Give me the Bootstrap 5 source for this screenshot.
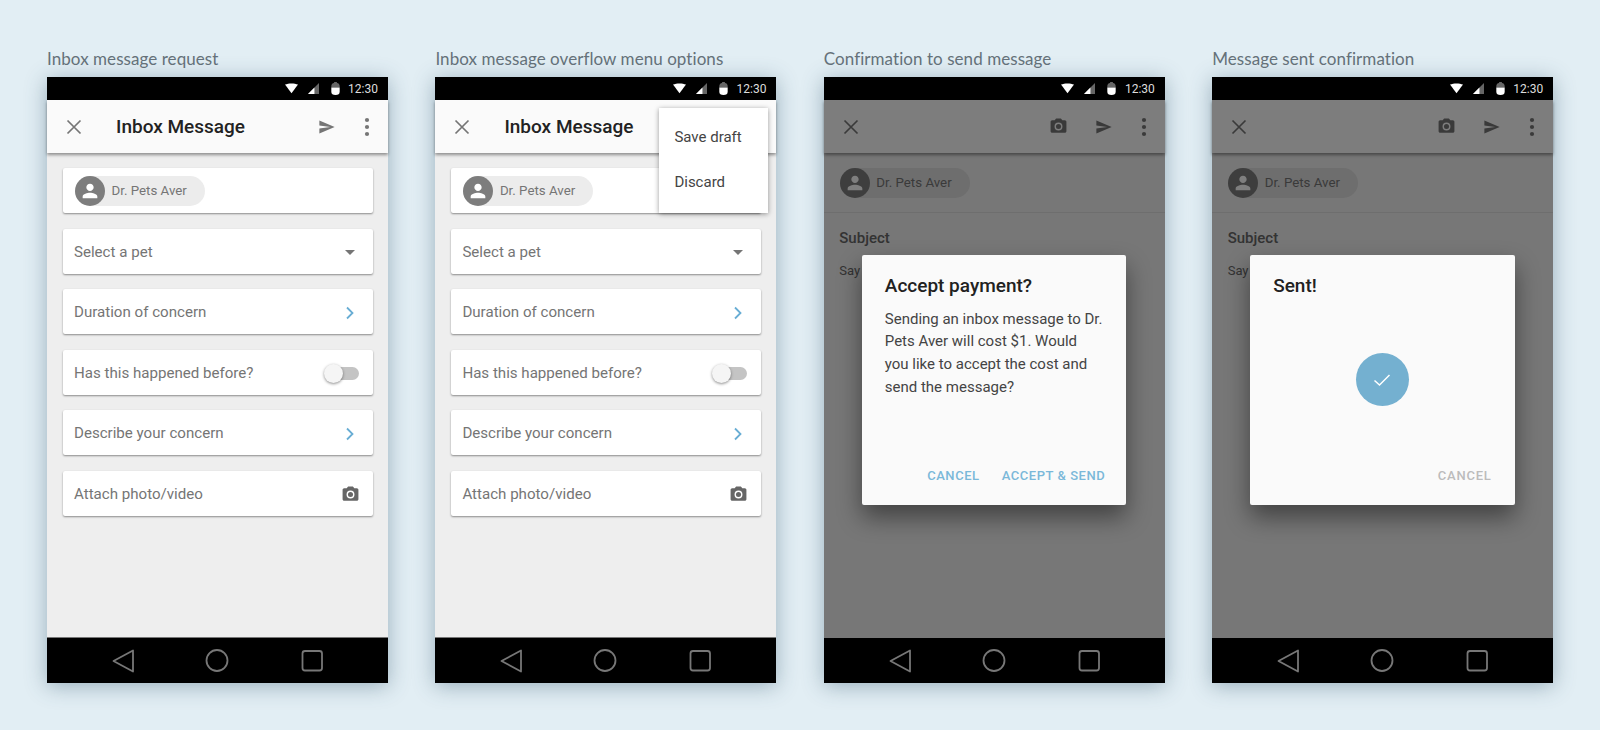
<!DOCTYPE html>
<html lang="en">
<head>
  <meta charset="UTF-8">
  <title>Inbox message flows</title>
  <meta name="viewport" content="width=device-width, initial-scale=1">
  <link href="https://cdn.jsdelivr.net/npm/bootstrap@5.3.2/dist/css/bootstrap.min.css" rel="stylesheet">
  <style>
    html, body { height: 730px; overflow: hidden; }
    body { background-color: #e2eef4; font-family: Roboto, "Liberation Sans", sans-serif; }
    .board { padding: 48px 0 0 47px; gap: 47.4px; }
    .flow { width: 341px; }
    .flow-label { font-family: Lato, "Liberation Sans", sans-serif; font-size: 17px; letter-spacing: .06px; line-height: 21px; height: 29px; color: #66727a; white-space: nowrap; }
    .phone { height: 606px; background: #eee; box-shadow: 0 3px 20px rgba(50, 85, 110, .42); }
    .status { height: 23px; background: #000; color: #ddd; font-size: 12px; padding-right: 10px; gap: 10px; }
    .st-batt { margin: 0 -1.5px 0 2px; }
    .appbar { height: 53px; background: #fafafa; box-shadow: 0 2px 3px rgba(0, 0, 0, .4); z-index: 1; padding: 0 9px 0 15px; }
    .appbar-title { font-size: 19px; font-weight: 500; color: #222; margin-left: 30px; padding-top: 1px; }
    .appbar-icons { gap: 16px; }
    .screen-body { padding: 15px 15px 0 15.6px; gap: 15.5px; }
    .field { height: 45px; border-radius: 2px; background: #fff; border: 0; box-shadow: 0 1px 2px rgba(0, 0, 0, .42); padding: 2px 11px 0 11.4px; color: #757575; font-size: 15.1px; }
    .field-chip { padding: 0 0 0 12.4px; }
    .person-chip { height: 30px; width: 130px; background: #ececec; border-radius: 15px; color: #757575; font-size: 13.3px; gap: 6.5px; }
    .avatar { width: 30px; height: 30px; background: #7d7d7d; border-radius: 50%; }
    .toggle { width: 28px; height: 13px; background: #c4c4c4; border-radius: 7px; position: relative; margin-right: 3px; }
    .toggle::before { content: ""; position: absolute; left: -7px; top: -3px; width: 19px; height: 19px; border-radius: 50%; background: #f5f5f5; box-shadow: 0 1px 3px rgba(0, 0, 0, .45); }
    .cam-field { margin-right: 2.5px; }
    .screen-nav { height: 46px; background: #000; border-top: 1px solid #777; }
    .over-menu { position: absolute; top: 31px; right: 8px; width: 109px; height: 105px; background: #fff; box-shadow: 0 1px 5px rgba(0, 0, 0, .4); z-index: 2; padding: 7px 0 0 15px; color: #444; font-size: 15px; }
    .over-menu div { height: 45px; line-height: 45px; }
    .dim-body { padding: 15px 16px 0 15.5px; }
    .dim-head { height: 45px; margin: 0 -16px 0 -15.5px; padding: 0 16px; border-bottom: 1px solid #ddd; }
    .dim-head .person-chip { background: #dcdcdc; }
    .dim-subject { margin-top: 15px; font-size: 15px; font-weight: 500; color: #666; line-height: 20px; }
    .dim-say { margin-top: 13px; font-size: 13px; color: #666; line-height: 20px; }
    .scrim { position: absolute; left: 0; right: 0; top: 23px; bottom: 46px; background: rgba(0, 0, 0, .5); z-index: 3; }
    .dialog-box { position: absolute; left: 38px; top: 178px; width: 264.5px; height: 250px; background: #fafafa; border-radius: 2px; box-shadow: 0 12px 24px rgba(0, 0, 0, .45); z-index: 4; }
    .dialog-title { font-size: 19px; font-weight: 500; color: #212121; padding: 19px 23px 0; line-height: 24px; height: 50px; white-space: nowrap; }
    .dialog-text { font-size: 15px; line-height: 22.7px; color: #444; padding: 2.5px 0 0 23px; white-space: nowrap; }
    .dialog-actions { height: 59px; padding: 0 21px 20px; gap: 22px; font-size: 13px; font-weight: 500; letter-spacing: .55px; color: #7ab8d9; }
    .dialog-actions.is-off { color: #bcbcbc; padding-right: 23px; letter-spacing: .8px; }
    .done-wrap { height: 146px; padding-top: 8px; }
    .done-dot { width: 53px; height: 53px; background: #74b0d0; border-radius: 50%; }
    svg { display: block; flex: none; }
  </style>
</head>
<body>

  <svg width="0" height="0" class="position-absolute">
    <symbol id="i-wifi" viewBox="0 0 14 11"><path d="M0 1.2C4 -.4 10 -.4 14 1.2L7 10.5z"/></symbol>
    <symbol id="i-signal" viewBox="0 0 12 12"><path d="M0 12 12 0v12z" fill="#666"/><path d="M0 12 7 5v7z" fill="#fff"/></symbol>
    <symbol id="i-batt" viewBox="0 0 9 14"><path d="M3 0h3v1.2C8 1.5 9 2.6 9 4.5V6H0V4.5C0 2.6 1 1.5 3 1.2z" fill="#666"/><path d="M0 6h9v4.5C9 12.8 7.5 14 4.5 14S0 12.8 0 10.5z" fill="#fff"/></symbol>
    <symbol id="i-close" viewBox="0 0 24 24"><path d="M5.5 5.5 18.5 18.5M18.5 5.5 5.5 18.5" fill="none" stroke="#757575" stroke-width="1.7"/></symbol>
    <symbol id="i-send" viewBox="-4 -4.5 33 33"><path d="M2.01 21 23 12 2.01 3 2 10l15 2-15 2z"/></symbol>
    <symbol id="i-more" viewBox="0 0 24 24"><circle cx="12" cy="5" r="2.1"/><circle cx="12" cy="12" r="2.1"/><circle cx="12" cy="19" r="2.1"/></symbol>
    <symbol id="i-camera" viewBox="0 0 24 24"><path fill-rule="evenodd" d="M9 2 7.17 4H4C2.9 4 2 4.9 2 6v12c0 1.1.9 2 2 2h16c1.1 0 2-.9 2-2V6c0-1.1-.9-2-2-2h-3.17L15 2zm3 15a5 5 0 1 1 0-10 5 5 0 0 1 0 10z"/><circle cx="12" cy="12" r="3.2"/></symbol>
    <symbol id="i-person" viewBox="0 0 24 24"><path d="M12 12c2.21 0 4-1.79 4-4s-1.79-4-4-4-4 1.79-4 4 1.79 4 4 4zm0 2c-2.67 0-8 1.34-8 4v2h16v-2c0-2.66-5.33-4-8-4z"/></symbol>
    <symbol id="i-chev" viewBox="0 0 24 24"><path d="M9 6.5 14.5 12 9 17.5" fill="none" stroke="#68add4" stroke-width="1.8"/></symbol>
    <symbol id="i-nav" viewBox="0 0 341 45"><g fill="none" stroke="#777" stroke-width="1.8" stroke-linejoin="round"><path d="M86 12.5v21L66.5 23z"/><circle cx="170" cy="22.5" r="10.5"/><rect x="255.5" y="13" width="19.5" height="19.5" rx="2.5"/></g></symbol>
  </svg>

  <div class="board d-flex">

    <!-- request -->
    <section class="flow">
      <div class="flow-label">Inbox message request</div>
      <div class="phone d-flex flex-column position-relative">
        <div class="status d-flex align-items-center justify-content-end">
          <svg width="13" height="11" fill="#fff"><use href="#i-wifi"/></svg>
          <svg width="11" height="11"><use href="#i-signal"/></svg>
          <svg width="9" height="13" class="st-batt"><use href="#i-batt"/></svg>
          <span>12:30</span>
        </div>
        <div class="appbar d-flex align-items-center position-relative">
          <svg width="24" height="24"><use href="#i-close"/></svg>
          <div class="appbar-title flex-grow-1">Inbox Message</div>
          <div class="appbar-icons d-flex">
            <svg width="24" height="24" fill="#757575"><use href="#i-send"/></svg>
            <svg width="24" height="24" fill="#757575"><use href="#i-more"/></svg>
          </div>
        </div>
        <div class="screen-body flex-grow-1 d-flex flex-column">
          <div class="field field-chip card flex-row align-items-center">
            <div class="person-chip d-flex align-items-center">
              <span class="avatar d-flex align-items-center justify-content-center"><svg width="22" height="22" fill="#fff"><use href="#i-person"/></svg></span>Dr. Pets Aver
            </div>
          </div>
          <div class="field card flex-row align-items-center justify-content-between">
            <span>Select a pet</span>
            <svg width="24" height="24" fill="#757575" viewBox="0 0 24 24"><path d="M7 10l5 5 5-5z"/></svg>
          </div>
          <div class="field card flex-row align-items-center justify-content-between">
            <span>Duration of concern</span>
            <svg width="24" height="24"><use href="#i-chev"/></svg>
          </div>
          <div class="field card flex-row align-items-center justify-content-between">
            <span>Has this happened before?</span>
            <div class="toggle"></div>
          </div>
          <div class="field card flex-row align-items-center justify-content-between">
            <span>Describe your concern</span>
            <svg width="24" height="24"><use href="#i-chev"/></svg>
          </div>
          <div class="field card flex-row align-items-center justify-content-between">
            <span>Attach photo/video</span>
            <svg width="19" height="19" fill="#666" class="cam-field"><use href="#i-camera"/></svg>
          </div>
        </div>
        <div class="screen-nav"><svg width="341" height="45"><use href="#i-nav"/></svg></div>
      </div>
    </section>

    <!-- overflow menu -->
    <section class="flow">
      <div class="flow-label">Inbox message overflow menu options</div>
      <div class="phone d-flex flex-column position-relative">
        <div class="status d-flex align-items-center justify-content-end">
          <svg width="13" height="11" fill="#fff"><use href="#i-wifi"/></svg>
          <svg width="11" height="11"><use href="#i-signal"/></svg>
          <svg width="9" height="13" class="st-batt"><use href="#i-batt"/></svg>
          <span>12:30</span>
        </div>
        <div class="appbar d-flex align-items-center position-relative">
          <svg width="24" height="24"><use href="#i-close"/></svg>
          <div class="appbar-title flex-grow-1">Inbox Message</div>
        </div>
        <div class="over-menu">
          <div>Save draft</div>
          <div>Discard</div>
        </div>
        <div class="screen-body flex-grow-1 d-flex flex-column">
          <div class="field field-chip card flex-row align-items-center">
            <div class="person-chip d-flex align-items-center">
              <span class="avatar d-flex align-items-center justify-content-center"><svg width="22" height="22" fill="#fff"><use href="#i-person"/></svg></span>Dr. Pets Aver
            </div>
          </div>
          <div class="field card flex-row align-items-center justify-content-between">
            <span>Select a pet</span>
            <svg width="24" height="24" fill="#757575" viewBox="0 0 24 24"><path d="M7 10l5 5 5-5z"/></svg>
          </div>
          <div class="field card flex-row align-items-center justify-content-between">
            <span>Duration of concern</span>
            <svg width="24" height="24"><use href="#i-chev"/></svg>
          </div>
          <div class="field card flex-row align-items-center justify-content-between">
            <span>Has this happened before?</span>
            <div class="toggle"></div>
          </div>
          <div class="field card flex-row align-items-center justify-content-between">
            <span>Describe your concern</span>
            <svg width="24" height="24"><use href="#i-chev"/></svg>
          </div>
          <div class="field card flex-row align-items-center justify-content-between">
            <span>Attach photo/video</span>
            <svg width="19" height="19" fill="#666" class="cam-field"><use href="#i-camera"/></svg>
          </div>
        </div>
        <div class="screen-nav"><svg width="341" height="45"><use href="#i-nav"/></svg></div>
      </div>
    </section>

    <!-- confirm -->
    <section class="flow">
      <div class="flow-label">Confirmation to send message</div>
      <div class="phone d-flex flex-column position-relative">
        <div class="status d-flex align-items-center justify-content-end">
          <svg width="13" height="11" fill="#fff"><use href="#i-wifi"/></svg>
          <svg width="11" height="11"><use href="#i-signal"/></svg>
          <svg width="9" height="13" class="st-batt"><use href="#i-batt"/></svg>
          <span>12:30</span>
        </div>
        <div class="appbar d-flex align-items-center position-relative">
          <svg width="24" height="24"><use href="#i-close"/></svg>
          <div class="flex-grow-1"></div>
          <div class="appbar-icons d-flex">
            <svg width="19" height="19" fill="#757575" class="align-self-center me-2"><use href="#i-camera"/></svg>
            <svg width="24" height="24" fill="#757575"><use href="#i-send"/></svg>
            <svg width="24" height="24" fill="#757575"><use href="#i-more"/></svg>
          </div>
        </div>
        <div class="dim-body flex-grow-1">
          <div class="dim-head">
            <div class="person-chip d-flex align-items-center">
              <span class="avatar d-flex align-items-center justify-content-center"><svg width="22" height="22" fill="#fff"><use href="#i-person"/></svg></span>Dr. Pets Aver
            </div>
          </div>
          <div class="dim-subject">Subject</div>
          <div class="dim-say">Say</div>
        </div>
        <div class="screen-nav"><svg width="341" height="45"><use href="#i-nav"/></svg></div>
        <div class="scrim"></div>
        <div class="dialog-box d-flex flex-column">
          <div class="dialog-title">Accept payment?</div>
          <div class="dialog-text flex-grow-1">Sending an inbox message to Dr.<br>Pets Aver will cost $1. Would<br>you like to accept the cost and<br>send the message?</div>
          <div class="dialog-actions d-flex align-items-end justify-content-end">
            <span>CANCEL</span>
            <span>ACCEPT &amp; SEND</span>
          </div>
        </div>
      </div>
    </section>

    <!-- sent -->
    <section class="flow">
      <div class="flow-label">Message sent confirmation</div>
      <div class="phone d-flex flex-column position-relative">
        <div class="status d-flex align-items-center justify-content-end">
          <svg width="13" height="11" fill="#fff"><use href="#i-wifi"/></svg>
          <svg width="11" height="11"><use href="#i-signal"/></svg>
          <svg width="9" height="13" class="st-batt"><use href="#i-batt"/></svg>
          <span>12:30</span>
        </div>
        <div class="appbar d-flex align-items-center position-relative">
          <svg width="24" height="24"><use href="#i-close"/></svg>
          <div class="flex-grow-1"></div>
          <div class="appbar-icons d-flex">
            <svg width="19" height="19" fill="#757575" class="align-self-center me-2"><use href="#i-camera"/></svg>
            <svg width="24" height="24" fill="#757575"><use href="#i-send"/></svg>
            <svg width="24" height="24" fill="#757575"><use href="#i-more"/></svg>
          </div>
        </div>
        <div class="dim-body flex-grow-1">
          <div class="dim-head">
            <div class="person-chip d-flex align-items-center">
              <span class="avatar d-flex align-items-center justify-content-center"><svg width="22" height="22" fill="#fff"><use href="#i-person"/></svg></span>Dr. Pets Aver
            </div>
          </div>
          <div class="dim-subject">Subject</div>
          <div class="dim-say">Say</div>
        </div>
        <div class="screen-nav"><svg width="341" height="45"><use href="#i-nav"/></svg></div>
        <div class="scrim"></div>
        <div class="dialog-box d-flex flex-column">
          <div class="dialog-title">Sent!</div>
          <div class="done-wrap flex-grow-1 d-flex align-items-center justify-content-center">
            <div class="done-dot d-flex align-items-center justify-content-center">
              <svg width="18" height="18" fill="none" stroke="#fff" stroke-width="1.5" viewBox="0 0 18 18"><path d="M1.5 9.5 6.5 14 16.5 4"/></svg>
            </div>
          </div>
          <div class="dialog-actions is-off d-flex align-items-end justify-content-end">
            <span>CANCEL</span>
          </div>
        </div>
      </div>
    </section>

  </div>

</body>
</html>
